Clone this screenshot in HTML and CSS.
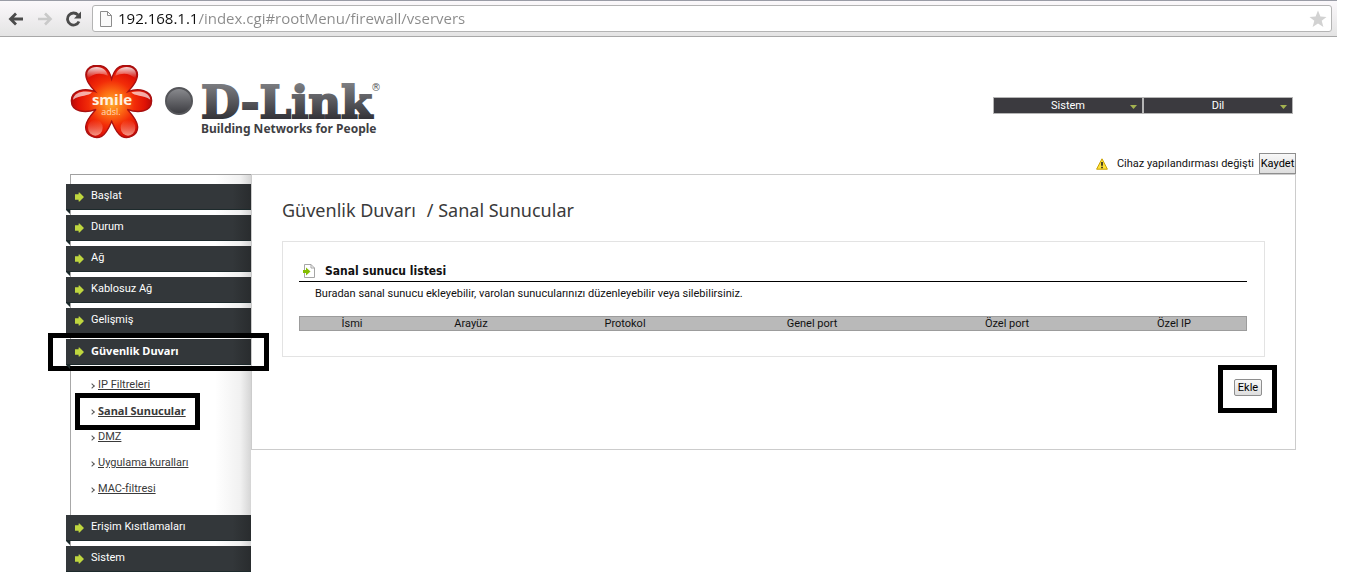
FILE: index.html
```html
<!DOCTYPE html>
<html lang="tr">
<head>
<meta charset="utf-8">
<title>Sanal Sunucular</title>
<link rel="stylesheet" href="styles.css">
</head>
<body>
<div class="browser-bar">
  <button class="nav-btn" type="button" aria-label="Geri">
    <svg width="18" height="16" viewBox="0 0 18 16"><path d="M16 8H4M9 2.500L3.500 8L9 13.500" fill="none" stroke="#4b4b4b" stroke-width="2.800"/></svg>
  </button>
  <button class="nav-btn" type="button" aria-label="İleri">
    <svg width="18" height="16" viewBox="0 0 18 16"><path d="M2 8H14M9 2.500L14.500 8L9 13.500" fill="none" stroke="#c9c9c9" stroke-width="2.600"/></svg>
  </button>
  <button class="nav-btn" type="button" aria-label="Yenile">
    <svg width="18" height="16" viewBox="0 0 18 16"><path d="M14 10.500A6 6 0 1 1 13 4" fill="none" stroke="#4b4b4b" stroke-width="2.800"/><path d="M16 0.500V7.500H9Z" fill="#4b4b4b"/></svg>
  </button>
  <div class="address">
    <svg class="page-icon" width="12" height="16" viewBox="0 0 12 16"><path d="M.5.500H7.500L11.500 4.500V15.500H.5ZM7.500.500V4.500H11.500" fill="#fafafa" stroke="#8c8c8c"/></svg>
    <input class="url" type="text" aria-label="Adres" value="192.168.1.1/index.cgi#rootMenu/firewall/vservers">
    <svg class="star" width="18" height="18" viewBox="0 0 18 18"><path d="M9 .5L11.400 6.500L17.500 6.900L12.700 10.700L14.400 17L9 13.500L3.600 17L5.300 10.700L.5 6.900L6.600 6.500Z" fill="#d2d2d2"/></svg>
  </div>
</div>

<header class="site-header">
  <svg class="logo" width="312" height="76" viewBox="0 0 312 76" role="img" aria-label="smile adsl, D-Link">
    <defs>
      <radialGradient id="glow" gradientUnits="userSpaceOnUse" cx="155" cy="145" r="125">
        <stop offset="0" stop-color="#ffae2c"/><stop offset=".3" stop-color="#fc6a14"/><stop offset=".55" stop-color="#f22c08"/><stop offset=".8" stop-color="#e01205"/><stop offset="1" stop-color="#b00808"/>
      </radialGradient>
      <linearGradient id="shine" x1="0" y1="0" x2="0" y2="1">
        <stop offset="0" stop-color="#fff" stop-opacity=".85"/><stop offset="1" stop-color="#fff" stop-opacity="0"/>
      </linearGradient>
      <linearGradient id="shade" x1="0" y1="0" x2="0" y2="1">
        <stop offset="0" stop-color="#ff9c80" stop-opacity="0"/><stop offset="1" stop-color="#ffb8a4" stop-opacity=".8"/>
      </linearGradient>
      <linearGradient id="steel" x1="0" y1="0" x2="0" y2="1">
        <stop offset="0" stop-color="#8b8c90"/><stop offset="1" stop-color="#3b3b40"/>
      </linearGradient>
      <linearGradient id="steel-name" gradientUnits="userSpaceOnUse" x1="0" y1="18" x2="0" y2="54">
        <stop offset="0" stop-color="#7d7e82"/><stop offset="1" stop-color="#333338"/>
      </linearGradient>
    </defs>
    <g transform="scale(.3333) translate(-30 -30)">
      <path d="M155 72C163 42 175 31 200 31C225 31 238 50 230 72C225 88 214 98 204 110C235 98 275 105 275 137C275 170 235 176 202 163C215 178 232 195 233 215C234 240 205 255 185 244C170 236 162 215 155 199C148 215 140 236 125 244C105 255 76 240 77 215C78 195 95 178 108 163C75 176 34 170 34 137C34 105 75 98 106 110C96 98 85 88 80 72C72 50 85 31 110 31C135 31 147 42 155 72Z" fill="url(#glow)" stroke="#a81010" stroke-width="4"/>
      <path d="M84 70C76 48 90 36 110 36C130 36 140 48 144 62C122 52 100 54 84 70Z" fill="url(#shine)"/>
      <path d="M226 70C234 48 220 36 200 36C180 36 170 48 166 62C188 52 210 54 226 70Z" fill="url(#shine)"/>
      <path d="M39 134C42 112 70 106 96 112C88 124 60 120 39 134Z" fill="#fff" opacity=".65"/>
      <path d="M271 134C268 112 240 106 214 112C222 124 250 120 271 134Z" fill="#fff" opacity=".65"/>
      <ellipse cx="106" cy="218" rx="22" ry="24" fill="url(#shade)"/>
      <ellipse cx="204" cy="218" rx="22" ry="24" fill="url(#shade)"/>
    </g>
    <text class="logo-smile" x="42" y="40">smile</text>
    <text class="logo-adsl" x="41" y="50">adsl.</text>
    <circle cx="109" cy="36" r="13" fill="url(#steel)" stroke="#55565a" stroke-width="2"/>
    <text class="logo-name" x="131" y="53" fill="url(#steel-name)" stroke="url(#steel-name)">D-Link</text>
    <text class="logo-reg" x="301" y="26">®</text>
    <text class="logo-tag" x="131" y="68">Building Networks for People</text>
  </svg>
  <nav class="top-menu" aria-label="Üst menü">
    <button class="top-item" type="button">Sistem<svg class="caret" width="7" height="4" viewBox="0 0 7 4"><path d="M0 0H7L3.500 4Z" fill="#a3b250"/></svg></button>
    <button class="top-item" type="button">Dil<svg class="caret" width="7" height="4" viewBox="0 0 7 4"><path d="M0 0H7L3.500 4Z" fill="#a3b250"/></svg></button>
  </nav>
</header>

<div class="notice">
  <svg width="12" height="12" viewBox="0 0 12 12"><path d="M6 .8L11.400 11.200H.6Z" fill="#ffe23a" stroke="#c9a000" stroke-linejoin="round"/><path d="M6 4V7.800M6 8.700V10.200" stroke="#222" stroke-width="1.600"/></svg>
  <span>Cihaz yapılandırması değişti</span>
  <button class="btn btn-save" type="button">Kaydet</button>
</div>

<div class="layout">
  <nav class="sidebar" aria-label="Ana menü">
    <ul class="menu">
      <li><a class="menu-link" href="#baslat"><svg class="arrow" viewBox="0 0 10 10"><path d="M0 2H4V0H5L10 5L5 10H4V8H0Z"/></svg>Başlat</a></li>
      <li><a class="menu-link" href="#durum"><svg class="arrow" viewBox="0 0 10 10"><path d="M0 2H4V0H5L10 5L5 10H4V8H0Z"/></svg>Durum</a></li>
      <li><a class="menu-link" href="#ag"><svg class="arrow" viewBox="0 0 10 10"><path d="M0 2H4V0H5L10 5L5 10H4V8H0Z"/></svg>Ağ</a></li>
      <li><a class="menu-link" href="#kablosuz"><svg class="arrow" viewBox="0 0 10 10"><path d="M0 2H4V0H5L10 5L5 10H4V8H0Z"/></svg>Kablosuz Ağ</a></li>
      <li><a class="menu-link" href="#gelismis"><svg class="arrow" viewBox="0 0 10 10"><path d="M0 2H4V0H5L10 5L5 10H4V8H0Z"/></svg>Gelişmiş</a></li>
      <li class="open">
        <a class="menu-link current" href="#guvenlik"><svg class="arrow" viewBox="0 0 10 10"><path d="M0 2H4V0H5L10 5L5 10H4V8H0Z"/></svg>Güvenlik Duvarı<span class="mark mark-menu"></span></a>
        <ul class="submenu">
          <li><a href="#ip">IP Filtreleri</a></li>
          <li class="selected"><a href="#vservers">Sanal Sunucular</a><span class="mark mark-sub"></span></li>
          <li><a href="#dmz">DMZ</a></li>
          <li><a href="#uygulama">Uygulama kuralları</a></li>
          <li><a href="#mac">MAC-filtresi</a></li>
        </ul>
      </li>
      <li><a class="menu-link" href="#erisim"><svg class="arrow" viewBox="0 0 10 10"><path d="M0 2H4V0H5L10 5L5 10H4V8H0Z"/></svg>Erişim Kısıtlamaları</a></li>
      <li><a class="menu-link" href="#sistem"><svg class="arrow" viewBox="0 0 10 10"><path d="M0 2H4V0H5L10 5L5 10H4V8H0Z"/></svg>Sistem</a></li>
    </ul>
  </nav>

  <main class="content">
    <h1 class="title"><span>Güvenlik Duvarı</span><span>/ Sanal Sunucular</span></h1>
    <section class="card">
      <h2 class="card-title">
        <svg width="12" height="14" viewBox="0 0 12 14"><path d="M1.500.500H8L11.500 4V13.500H1.500ZM8 .5V4H11.500" fill="#fff" stroke="#a5a5a5"/><path d="M0 6H3V3.500L7.500 7.500L3 11.500V9H0Z" fill="#84bd00"/></svg>
        Sanal sunucu listesi
      </h2>
      <p class="card-text">Buradan sanal sunucu ekleyebilir, varolan sunucularınızı düzenleyebilir veya silebilirsiniz.</p>
      <table class="servers">
        <colgroup><col class="c-name"><col class="c-iface"><col class="c-proto"><col class="c-pub"><col class="c-priv"><col class="c-ip"></colgroup>
        <thead>
          <tr><th scope="col">İsmi</th><th scope="col">Arayüz</th><th scope="col">Protokol</th><th scope="col">Genel port</th><th scope="col">Özel port</th><th scope="col">Özel IP</th></tr>
        </thead>
      </table>
    </section>
    <div class="actions">
      <div class="action-mark"><button class="btn btn-add" type="button">Ekle</button></div>
    </div>
  </main>
</div>
</body>
</html>
```
FILE: styles.css
```css
* {
  box-sizing: border-box;
}

body {
  margin: 0;
  background: #fff;
  color: #111;
  font: 11px/16px Roboto, "Noto Sans", sans-serif;
}

button {
  font: inherit;
  cursor: pointer;
}

ul {
  margin: 0;
  padding: 0;
  list-style: none;
}

/* Browser toolbar */
.browser-bar {
  display: flex;
  align-items: center;
  gap: 11px;
  height: 37px;
  margin-right: 15px;
  padding: 0 5px 0 7px;
  border-top: 1px solid #9a9ca6;
  border-bottom: 1px solid #a8a8a8;
  background: linear-gradient(#fbf8fb, #e4e4e4);
}

.nav-btn {
  display: flex;
  padding: 0;
  border: 0;
  background: none;
}

.address {
  display: flex;
  flex: 1;
  align-items: center;
  height: 27px;
  margin-left: -2px;
  padding: 0 4px 0 7px;
  border: 1px solid #b4b4b4;
  border-radius: 3px;
  background: #fff;
}

.url {
  flex: 1;
  min-width: 0;
  margin-left: 6px;
  padding: 0 0 2px;
  border: 0;
  outline: 0;
  background: linear-gradient(90deg, #111 80px, #8a8a8a 80px);
  background-clip: text;
  color: transparent;
  font: 15px/24px "Open Sans", sans-serif;
}

/* Site header */
.site-header {
  display: flex;
  align-items: flex-start;
  justify-content: space-between;
  padding: 28px 59px 12px 70px;
}

.logo .logo-smile {
  fill: #fff1e0;
  font: bold 15px "Open Sans", sans-serif;
  text-anchor: middle;
}

.logo .logo-adsl {
  fill: #ffd9b8;
  font: 9px "Open Sans", sans-serif;
  text-anchor: middle;
}

.logo .logo-name {
  font: bold 45px "DejaVu Serif", serif;
  stroke-width: 2px;
}

.logo .logo-reg {
  fill: #55565a;
  font: 10px "DejaVu Sans", sans-serif;
}

.logo .logo-tag {
  fill: #3f3f44;
  font: bold 12px "Noto Sans", sans-serif;
}

.top-menu {
  display: flex;
  gap: 2px;
  margin-top: 32px;
  border: 1px solid #b5b5b5;
  background: #b5b5b5;
}

.top-item {
  position: relative;
  width: 148px;
  height: 15px;
  padding: 0;
  border: 0;
  background: #3b3a3f;
  color: #fff;
  line-height: 15px;
}

.caret {
  position: absolute;
  top: 7px;
  right: 5px;
}

.notice {
  display: flex;
  align-items: center;
  justify-content: flex-end;
  height: 21px;
  margin-right: 56px;
}

.notice span {
  margin: 0 5px 0 9px;
}

.btn {
  padding: 0;
  border: 1px solid #8e8e8e;
  background: linear-gradient(#f8f8f8, #dedede);
  color: #000;
}

.btn-save {
  width: 37px;
  height: 21px;
}

.btn-add {
  display: block;
  width: 28px;
  height: 17px;
  border-radius: 2px;
  line-height: 15px;
}

/* Main area */
.layout {
  display: flex;
  align-items: flex-start;
  margin: 0 56px 0 70px;
}

.sidebar {
  flex: none;
  width: 181px;
  padding-top: 9px;
  border-top: 1px solid #a0a0a0;
  border-left: 1px solid #a8a8a8;
  background: linear-gradient(90deg, #fff 80%, #f1f1f1 94%, #d5d5d5);
}

.menu {
  display: flex;
  flex-direction: column;
  gap: 5px;
  margin-left: -5px;
}

.menu-link {
  position: relative;
  display: flex;
  align-items: center;
  gap: 7px;
  height: 26px;
  padding: 0 0 1px 9px;
  border-bottom: 1px solid #1d2a2c;
  background: linear-gradient(90deg, #33373a 90%, #292c2e);
  color: #fff;
  text-decoration: none;
}

.menu-link::after {
  content: "";
  position: absolute;
  top: 26px;
  left: 0;
  border-top: 4px solid #1d2a2c;
  border-left: 4px solid transparent;
}

.current,
.selected {
  font-family: "Noto Sans", sans-serif;
  font-weight: bold;
}

.arrow {
  width: 9px;
  height: 10px;
  margin-top: 2px;
  fill: #bfd63f;
}

.submenu {
  padding: 7px 0 0 24px;
}

.submenu li {
  position: relative;
  display: flex;
  align-items: center;
  height: 26px;
}

.submenu li:last-child {
  margin-bottom: 8px;
}

.submenu li::before {
  content: "";
  width: 3px;
  height: 3px;
  margin: 2px 4px 0 0;
  border-top: 1px solid #555;
  border-right: 1px solid #555;
  transform: rotate(45deg);
}

.submenu a {
  color: #3a3a3a;
}

.content {
  flex: 1;
  min-width: 0;
  padding: 21px 30px 36px;
  border: 1px solid #ccc;
}

.title {
  display: flex;
  gap: 11px;
  margin: 0 0 17px;
  color: #3a3a3a;
  font: 18px/28px "Noto Sans", sans-serif;
}

.card {
  padding: 19px 17px 25px 16px;
  border: 1px solid #e3e3e3;
}

.card-title {
  display: flex;
  align-items: center;
  gap: 10px;
  margin: 0;
  padding: 0 4px;
  border-bottom: 1px solid #000;
  font: bold 12px/20px "DejaVu Sans Condensed", "DejaVu Sans", sans-serif;
}

.card-text {
  margin: 4px 16px 14px;
}

.servers {
  width: 100%;
  border: 1px solid #9c9c9c;
  border-spacing: 0;
  background: #b9b9b9;
  table-layout: fixed;
}

.servers th {
  padding: 0;
  font-weight: normal;
  line-height: 13px;
}

.c-name { width: 52px; }
.c-iface { width: 67px; }
.c-proto { width: 87px; }
.c-pub { width: 100px; }
.c-priv { width: 95px; }
.c-ip { width: 72px; }

.actions {
  display: flex;
  justify-content: flex-end;
  margin: 8px -12px 0 0;
}

/* Highlight frames */
.mark {
  position: absolute;
  border: 5px solid #000;
}

.mark-menu {
  inset: -6px -18px -7px -18px;
}

.mark-sub {
  top: -5px;
  bottom: -6px;
  left: -15px;
  width: 125px;
}

.action-mark {
  padding: 9px 10px 12px 11px;
  border: 5px solid #000;
}
```
